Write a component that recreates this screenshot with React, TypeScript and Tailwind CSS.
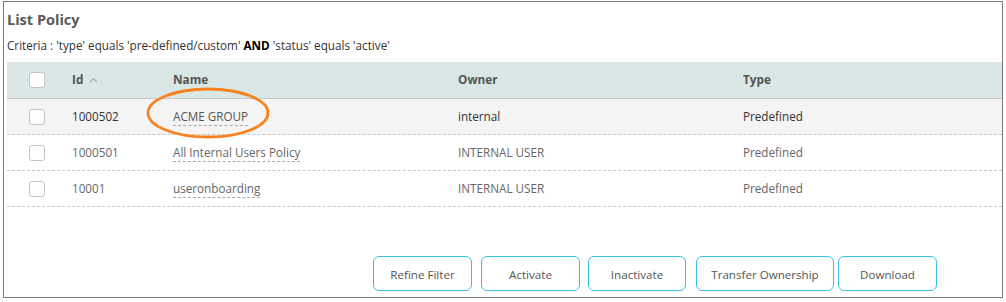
import React from "react";

const rows = [
  { id: "1000502", name: "ACME GROUP", owner: "internal", type: "Predefined", hl: true },
  { id: "1000501", name: "All Internal Users Policy", owner: "INTERNAL USER", type: "Predefined", hl: false },
  { id: "10001", name: "useronboarding", owner: "INTERNAL USER", type: "Predefined", hl: false },
];

function Box() {
  return <div className="w-[16px] h-[16px] rounded-[3px] border border-[#c4c4c4] bg-white" />;
}

export default function App() {
  return (
    <div
      className="w-[1006px] h-[302px] bg-white pl-[3px] pt-[1px] relative"
      style={{ fontFamily: "'Open Sans', 'Noto Sans', sans-serif" }}
    >
      <div className="w-[1000px] h-[297px] border border-[#7a7a7a] pl-[3px] flex flex-col">
        <div className="h-[60px] flex flex-col">
          <div className="pt-[8px] text-[14.5px] leading-[19px] font-bold text-[#5a5a5a]">List Policy</div>
          <div className="pt-[8px] text-[11.7px] leading-[16px] text-[#333]">
            Criteria : 'type' equals 'pre-defined/custom' <span className="font-bold text-black">AND</span> 'status' equals 'active'
          </div>
        </div>
        <div className="grid grid-cols-[65px_101px_285px_285px_1fr] h-[37px] bg-[#d9e7e7] border-b border-[#c8c8c8] items-center text-[11.8px] font-bold text-[#555]">
          <div className="pl-[22px]"><Box /></div>
          <div className="flex items-center gap-[6px]">
            Id
            <svg width="9" height="6" viewBox="0 0 9 6" className="mt-[-1px]">
              <path d="M1 5 L4.5 1.5 L8 5" fill="none" stroke="#aaa" strokeWidth="1.2" />
            </svg>
          </div>
          <div>Name</div>
          <div>Owner</div>
          <div>Type</div>
        </div>
        {rows.map((r) => (
          <div
            key={r.id}
            className={`grid grid-cols-[65px_101px_285px_285px_1fr] h-[36px] border-b border-dashed border-[#c8c8c8] items-center text-[11.7px] ${
              r.hl ? "bg-[#f4f4f4] text-[#333]" : "bg-white text-[#666]"
            }`}
          >
            <div className="pl-[22px]"><Box /></div>
            <div>{r.id}</div>
            <div>
              <span className={`border-b border-dashed border-[#aaa] pb-[1px] ${r.hl ? "text-[#555]" : "text-[#666]"}`}>{r.name}</span>
            </div>
            <div>{r.owner}</div>
            <div>{r.type}</div>
          </div>
        ))}
        <div className="mt-[49px] flex pl-[366px] text-[11.6px] text-[#555]">
          <button className="w-[99px] h-[35px] pt-[2px] rounded-[6px] border border-[#3cbfe3] bg-white">Refine Filter</button>
          <button className="ml-[9px] w-[99px] h-[35px] pt-[2px] rounded-[6px] border border-[#3cbfe3] bg-white">Activate</button>
          <button className="ml-[8px] w-[98px] h-[35px] pt-[2px] rounded-[6px] border border-[#3cbfe3] bg-white">Inactivate</button>
          <button className="ml-[10px] w-[138px] h-[35px] pt-[2px] rounded-[6px] border border-[#3cbfe3] bg-white">Transfer Ownership</button>
          <button className="ml-[4px] w-[99px] h-[35px] pt-[2px] rounded-[6px] border border-[#3cbfe3] bg-white">Download</button>
        </div>
      </div>
      <svg className="absolute left-0 top-0 pointer-events-none" width="1006" height="302">
        <ellipse cx="208" cy="113" rx="60" ry="24" fill="none" stroke="#f7821f" strokeWidth="2.8" />
      </svg>
    </div>
  );
}
